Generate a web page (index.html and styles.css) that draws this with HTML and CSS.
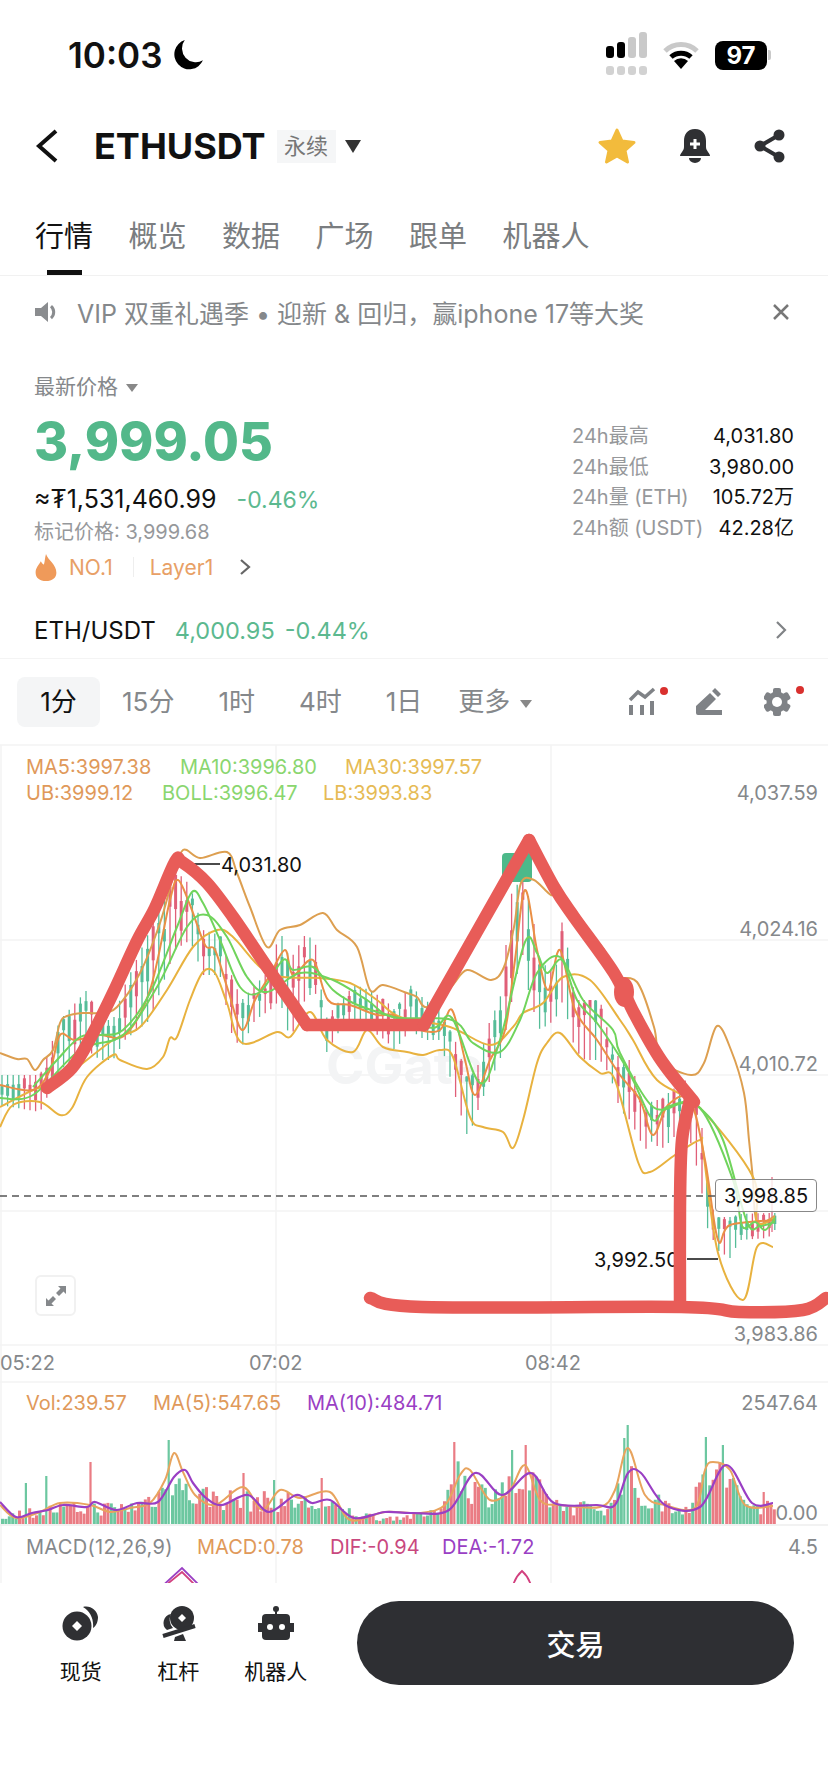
FILE: index.html
```html
<!DOCTYPE html>
<html lang="zh-CN">
<head>
    <meta charset="UTF-8">
    <meta name="viewport" content="width=device-width, initial-scale=1.0">
    <title>ETHUSDT 永续</title>
    <link rel="stylesheet" href="styles.css">
</head>
<body>
    <div class="status-bar">
        <div class="clock">
            <span>10:03</span>
            <svg width="32" height="32" viewBox="0 0 30 30"><path d="M12 1 A14 14 0 1 0 29 20 A13 13 0 0 1 12 1 Z" fill="#000"/></svg>
        </div>
        <div class="status-icons">
            <svg width="42" height="46" viewBox="0 0 42 46">
                <rect x="0" y="14" width="8" height="12" rx="3" fill="#000"/>
                <rect x="11" y="10" width="8" height="16" rx="3" fill="#000"/>
                <rect x="22" y="5" width="8" height="21" rx="3" fill="#c9c9c9"/>
                <rect x="33" y="0" width="8" height="26" rx="3" fill="#c9c9c9"/>
                <rect x="0" y="34" width="8" height="9" rx="3" fill="#d2d2d2"/>
                <rect x="11" y="34" width="8" height="9" rx="3" fill="#d2d2d2"/>
                <rect x="22" y="34" width="8" height="9" rx="3" fill="#d2d2d2"/>
                <rect x="33" y="34" width="8" height="9" rx="3" fill="#d2d2d2"/>
            </svg>
            <svg class="wifi" width="36" height="30" viewBox="0 0 36 30">
                <path d="M2 11 A23 23 0 0 1 34 11" fill="none" stroke="#c9c9c9" stroke-width="5"/>
                <path d="M8 17 A15 15 0 0 1 28 17" fill="none" stroke="#000" stroke-width="5"/>
                <path d="M11 21 L18 29 L25 21 A10 10 0 0 0 11 21 Z" fill="#000"/>
            </svg>
            <div class="battery">97</div>
            <div class="battery-tip"></div>
        </div>
    </div>

    <div class="nav">
        <svg class="back" width="24" height="34" viewBox="0 0 24 34"><path d="M22 2 L5 17 L22 32" fill="none" stroke="#111" stroke-width="4"/></svg>
        <span class="symbol">ETHUSDT</span>
        <span class="badge">永续</span>
        <span class="caret"></span>
        <div class="nav-icons">
            <svg width="40" height="38" viewBox="0 0 40 38"><path d="M20 3 L25 14 L37 15.500 L28 23.500 L30.500 35 L20 29 L9.500 35 L12 23.500 L3 15.500 L15 14 Z" fill="#f2bb3c" stroke="#f2bb3c" stroke-width="3" stroke-linejoin="round"/></svg>
            <svg width="32" height="34" viewBox="0 0 32 34">
                <path d="M16 0 C24 0 27 6 27 12 L27 18 C27 22 31 24 31 27 L1 27 C1 24 5 22 5 18 L5 12 C5 6 8 0 16 0 Z" fill="#2f3033"/>
                <path d="M10 29 L22 29 A6 5 0 0 1 10 29 Z" fill="#2f3033"/>
                <path d="M16 10 L16 20 M11 15 L21 15" stroke="#fff" stroke-width="3"/>
            </svg>
            <svg width="34" height="34" viewBox="0 0 34 34">
                <path d="M26 6 L7 17 L26 28" fill="none" stroke="#2f3033" stroke-width="4"/>
                <circle cx="26" cy="6" r="5.500" fill="#2f3033"/>
                <circle cx="7" cy="17" r="5.500" fill="#2f3033"/>
                <circle cx="26" cy="28" r="5.500" fill="#2f3033"/>
            </svg>
        </div>
    </div>

    <div class="tabs">
        <div class="tab active">行情</div>
        <div class="tab">概览</div>
        <div class="tab">数据</div>
        <div class="tab">广场</div>
        <div class="tab">跟单</div>
        <div class="tab">机器人</div>
    </div>

    <div class="notice">
        <svg width="24" height="22" viewBox="0 0 24 22">
            <path d="M0 7 L6 7 L13 1 L13 21 L6 15 L0 15 Z" fill="#8a8c8f"/>
            <path d="M16 5 A8 8 0 0 1 16 17" fill="none" stroke="#8a8c8f" stroke-width="3"/>
        </svg>
        <span class="notice-text">VIP 双重礼遇季 • 迎新 &amp; 回归，赢iphone 17等大奖</span>
        <svg class="notice-close" width="18" height="18" viewBox="0 0 18 18"><path d="M2 2 L16 16 M16 2 L2 16" stroke="#777" stroke-width="2.500"/></svg>
    </div>

    <div class="price-block">
        <div class="price-left">
            <div class="price-label">最新价格 <span class="caret small"></span></div>
            <div class="price-big">3,999.05</div>
            <div class="price-fiat">≈₮1,531,460.99<span class="up">-0.46%</span></div>
            <div class="price-mark">标记价格: 3,999.68</div>
            <div class="price-tags">
                <svg width="24" height="27" viewBox="0 0 22 26"><path d="M11 0 C13 6 21 10 21 18 C21 23 17 26 11 26 C5 26 1 23 1 18 C1 13 4 11 6 7 C7 9 8 10 9 10 C10 7 10 3 11 0 Z" fill="#ef9a5a"/></svg>
                <span class="tag-no">NO.1</span>
                <span class="tag-sep"></span>
                <span class="tag-name">Layer1</span>
                <svg width="12" height="18" viewBox="0 0 12 18"><path d="M2 2 L10 9 L2 16" fill="none" stroke="#666" stroke-width="2.200"/></svg>
            </div>
        </div>
        <div class="stats">
            <div class="stat"><span>24h最高</span><b>4,031.80</b></div>
            <div class="stat"><span>24h最低</span><b>3,980.00</b></div>
            <div class="stat"><span>24h量 (ETH)</span><b>105.72万</b></div>
            <div class="stat"><span>24h额 (USDT)</span><b>42.28亿</b></div>
        </div>
    </div>

    <div class="spot-row">
        <span class="spot-name">ETH/USDT</span>
        <span class="spot-price">4,000.95</span>
        <span class="spot-price">-0.44%</span>
        <svg class="spot-more" width="12" height="20" viewBox="0 0 12 20"><path d="M2 2 L10 10 L2 18" fill="none" stroke="#808386" stroke-width="2.200"/></svg>
    </div>

    <div class="timeframes">
        <div class="tf active">1分</div>
        <div class="tf">15分</div>
        <div class="tf">1时</div>
        <div class="tf">4时</div>
        <div class="tf">1日</div>
        <div class="tf more">更多 <span class="caret small"></span></div>
        <div class="tf-icons">
            <svg width="42" height="30" viewBox="0 0 42 30">
                <path d="M2 13 L10 5 L17 10 L26 2" fill="none" stroke="#7f8286" stroke-width="3.500"/>
                <path d="M3 18 L3 28 M14 18 L14 28 M24 14 L24 28" stroke="#7f8286" stroke-width="4"/>
                <circle cx="36" cy="4" r="4" fill="#d9302e"/>
            </svg>
            <svg width="28" height="30" viewBox="0 0 28 30">
                <path d="M1 19 L15 6 L21 12 L10 23 L27 23 L27 28 L3 28 Q1 28 1 26 Z M17 4 L20 1 L26 7 L23 10 Z" fill="#7f8286"/>
            </svg>
            <svg class="gear" width="44" height="32" viewBox="0 0 44 32">
                <g fill="#7f8286">
                    <circle cx="13" cy="16" r="10.500"/>
                    <rect x="9" y="2" width="8" height="28" rx="2"/>
                    <rect x="9" y="2" width="8" height="28" rx="2" transform="rotate(60 13 16)"/>
                    <rect x="9" y="2" width="8" height="28" rx="2" transform="rotate(120 13 16)"/>
                </g>
                <circle cx="13" cy="16" r="5" fill="#fff"/>
                <circle cx="36" cy="4" r="4" fill="#d9302e"/>
            </svg>
        </div>
    </div>

    <div class="chart">
        <svg class="chart-canvas" width="828" height="840" viewBox="0 743 828 840">
            <g class="grid">
                <path d="M0 745 L828 745 M0 940 L828 940 M0 1075 L828 1075 M0 1211 L828 1211 M0 1345 L828 1345 M0 1382 L828 1382"/>
                <path d="M1 745 L1 1583 M276 745 L276 1583 M551 745 L551 1583"/>
            </g>
            <text class="watermark" x="326" y="1084">CGate</text>
            <g id="candles"></g>
            <rect x="502" y="853" width="30" height="29" rx="4" fill="#4cb98a"/>
            <g id="curves"></g>
            <g id="volume"></g>
            <g id="macd"></g>

            <text class="legend" x="26" y="774" fill="#e0995a">MA5:3997.38</text>
            <text class="legend" x="180" y="774" fill="#8ad66f">MA10:3996.80</text>
            <text class="legend" x="345" y="774" fill="#e6bb55">MA30:3997.57</text>
            <text class="legend" x="26" y="800" fill="#e0995a">UB:3999.12</text>
            <text class="legend" x="162" y="800" fill="#8ad66f">BOLL:3996.47</text>
            <text class="legend" x="323" y="800" fill="#e6bb55">LB:3993.83</text>

            <text class="axis" x="818" y="800">4,037.59</text>
            <text class="axis" x="818" y="936">4,024.16</text>
            <text class="axis" x="818" y="1071">4,010.72</text>
            <text class="axis" x="818" y="1341">3,983.86</text>

            <path d="M193 864 L220 864 M687 1259 L718 1259" stroke="#111" stroke-width="1.500"/>
            <text class="mark" x="221" y="872">4,031.80</text>
            <text class="mark" x="594" y="1267">3,992.50</text>
            <path d="M0 1196 L715 1196" stroke="#555" stroke-width="1.500" stroke-dasharray="7 5"/>

            <text class="time" x="0" y="1370">05:22</text>
            <text class="time" x="249" y="1370">07:02</text>
            <text class="time" x="525" y="1370">08:42</text>

            <text class="legend" x="26" y="1410" fill="#e0995a">Vol:239.57</text>
            <text class="legend" x="153" y="1410" fill="#e0995a">MA(5):547.65</text>
            <text class="legend" x="307" y="1410" fill="#9a3fc4">MA(10):484.71</text>
            <text class="axis" x="818" y="1410">2547.64</text>
            <text class="axis" x="818" y="1520">0.00</text>

            <text class="legend wide" x="26" y="1554" fill="#85888b">MACD(12,26,9)</text>
            <text class="legend" x="197" y="1554" fill="#e0995a">MACD:0.78</text>
            <text class="legend" x="330" y="1554" fill="#c9487e">DIF:-0.94</text>
            <text class="legend" x="442" y="1554" fill="#9a3fc4">DEA:-1.72</text>
            <text class="axis" x="818" y="1554">4.5</text>

            <g id="ink"></g>
        </svg>
        <div class="last-price">3,998.85</div>
        <div class="expand">
            <svg width="22" height="22" viewBox="0 0 22 22">
                <path d="M13 1 L21 1 L21 9 L18.500 6.500 L14 11 L11 8 L15.500 3.500 Z M9 21 L1 21 L1 13 L3.500 15.500 L8 11 L11 14 L6.500 18.500 Z" fill="#85888b"/>
            </svg>
        </div>
    </div>

    <div class="bottom-bar">
        <div class="shortcut">
            <svg width="38" height="36" viewBox="0 0 38 36">
                <path d="M21 1 C28 -1 35 4 36 11 C36 16 34 20 31 22 C32 13 28 5 21 1 Z" fill="#2f3033"/>
                <circle cx="15" cy="20" r="14.500" fill="#2f3033"/>
                <path d="M15 15 L20 20 L15 25 L10 20 Z" fill="#fff"/>
            </svg>
            <span>现货</span>
        </div>
        <div class="shortcut">
            <svg width="38" height="36" viewBox="0 0 38 36">
                <circle cx="23" cy="12" r="12" fill="#2f3033"/>
                <path d="M23 8 L27 12 L23 16 L19 12 Z" fill="#fff"/>
                <path d="M12 8 A9 9 0 0 0 8 24 L14 22 A13 13 0 0 1 12 8 Z" fill="#2f3033"/>
                <path d="M4 30 L36 20" stroke="#2f3033" stroke-width="4"/>
                <path d="M16 31 L24 28 L27 35 L15 35 Z" fill="#2f3033"/>
            </svg>
            <span>杠杆</span>
        </div>
        <div class="shortcut">
            <svg width="38" height="36" viewBox="0 0 38 36">
                <circle cx="19" cy="3" r="3" fill="#2f3033"/>
                <path d="M18 4 L20 4 L20 10 L18 10 Z" fill="#2f3033"/>
                <rect x="5" y="8" width="28" height="26" rx="4" fill="#2f3033"/>
                <rect x="1" y="17" width="4" height="9" fill="#2f3033"/>
                <rect x="33" y="17" width="4" height="9" fill="#2f3033"/>
                <circle cx="13" cy="21" r="3" fill="#fff"/>
                <circle cx="25" cy="21" r="3" fill="#fff"/>
            </svg>
            <span>机器人</span>
        </div>
        <button class="trade">交易</button>
    </div>

    <script src="chart.js"></script>
</body>
</html>
```

FILE: styles.css
```css
* {
    box-sizing: border-box;
}

body {
    margin: 0;
    width: 828px;
    height: 1792px;
    overflow: hidden;
    background-color: #fff;
    color: #111;
    font-family: Inter, "Noto Sans CJK SC", sans-serif;
}

svg {
    display: block;
    flex: none;
}

.status-bar {
    display: flex;
    justify-content: space-between;
    align-items: center;
    height: 110px;
    padding: 0 57px 0 68px;
}

.clock {
    display: flex;
    align-items: center;
    gap: 10px;
    font-size: 35px;
    font-weight: 600;
}

.status-icons {
    display: flex;
    align-items: center;
}

.wifi {
    margin: 0 16px 0 15px;
}

.battery {
    width: 52px;
    height: 29px;
    border-radius: 8px;
    background-color: #000;
    color: #fff;
    font-size: 24px;
    font-weight: 700;
    line-height: 29px;
    text-align: center;
}

.battery-tip {
    width: 3px;
    height: 10px;
    margin-left: 1px;
    border-radius: 0 2px 2px 0;
    background-color: #c9c9c9;
}

.nav {
    display: flex;
    align-items: center;
    height: 72px;
    padding: 0 41px 0 34px;
}

.symbol {
    margin-left: 36px;
    font-size: 36px;
    font-weight: 700;
}

.badge {
    width: 59px;
    height: 33px;
    margin-left: 11px;
    background-color: #f5f6f7;
    color: #777;
    font-size: 22px;
    line-height: 33px;
    text-align: center;
}

.caret {
    width: 0;
    height: 0;
    margin-left: 9px;
    border-style: solid;
    border-width: 13px 8px 0;
    border-color: #333 transparent transparent;
}

.caret.small {
    display: inline-block;
    margin-left: 2px;
    border-width: 8px 6px 0;
    border-color: #888 transparent transparent;
    vertical-align: middle;
}

.nav-icons {
    display: flex;
    align-items: center;
    gap: 42px;
    margin-left: auto;
}

.tabs {
    display: flex;
    gap: 35.5px;
    height: 94px;
    padding: 39px 0 0 35px;
    border-bottom: 1px solid #f1f1f1;
}

.tab {
    color: #7a7d80;
    font-size: 29px;
    line-height: 32px;
}

.tab.active {
    color: #111;
}

.tab::after {
    content: "";
    display: block;
    width: 35px;
    height: 5px;
    margin: 17px auto 0;
}

.tab.active::after {
    background-color: #111;
}

.notice {
    display: flex;
    align-items: center;
    height: 72px;
    margin-bottom: 2px;
    padding: 0 38px 0 35px;
}

.notice-text {
    margin-left: 18px;
    color: #85888b;
    font-size: 25px;
}

.notice-close {
    margin-left: auto;
}

.price-block {
    display: flex;
    justify-content: space-between;
    height: 252px;
    padding: 25px 34px 0;
}

.price-label {
    color: #85888b;
    font-size: 21px;
    line-height: 24px;
}

.price-big {
    margin-top: 15px;
    color: #53b88a;
    font-size: 52px;
    font-weight: 800;
    line-height: 56px;
}

.price-fiat {
    margin-top: 14px;
    font-size: 25px;
    line-height: 30px;
}

.up {
    margin-left: 20px;
    color: #5cb98f;
    font-size: 23px;
}

.price-mark {
    margin-top: 4px;
    color: #96989b;
    font-size: 20px;
    line-height: 26px;
}

.price-tags {
    display: flex;
    align-items: center;
    height: 30px;
    margin-top: 7px;
    color: #e8a066;
    font-size: 21px;
}

.tag-no {
    margin-left: 11px;
}

.tag-sep {
    width: 1px;
    height: 20px;
    margin: 0 16px 0 20px;
    background-color: #eee;
}

.tag-name {
    margin-right: 26px;
}

.stats {
    width: 222px;
    padding-top: 46px;
    font-size: 20px;
}

.stat {
    display: flex;
    justify-content: space-between;
    height: 30.5px;
    line-height: 30.5px;
    color: #96989b;
    white-space: nowrap;
}

.stat b {
    color: #111;
    font-weight: 400;
}

.spot-row {
    display: flex;
    align-items: center;
    gap: 10px;
    height: 57px;
    padding: 0 41px 0 34px;
    border-bottom: 1px solid #f4f4f4;
    font-size: 24px;
}

.spot-name {
    margin-right: 9px;
}

.spot-price {
    color: #5cb98f;
    font-size: 23.500px;
}

.spot-more {
    margin-left: auto;
}

.timeframes {
    display: flex;
    align-items: flex-start;
    gap: 44px;
    height: 84px;
    padding: 18px 20px 0 17px;
    color: #85888b;
    font-size: 26px;
}

.tf {
    height: 50px;
    line-height: 50px;
    text-align: center;
}

.tf.active {
    width: 83px;
    margin-right: -22px;
    border-radius: 8px;
    background-color: #f4f5f6;
    color: #111;
}

.tf.more {
    margin-left: -8px;
    white-space: nowrap;
}

.tf-icons {
    display: flex;
    align-items: center;
    gap: 25px;
    height: 50px;
    margin-left: auto;
}

.gear {
    margin-left: 16px;
}

.chart {
    position: relative;
    height: 840px;
    overflow: hidden;
}

.chart-canvas {
    position: absolute;
    left: 0;
    top: 0;
}

.grid path {
    fill: none;
    stroke: #f4f4f4;
    stroke-width: 1.500;
}

.watermark {
    fill: #f3f4f5;
    font-size: 52px;
    font-weight: 700;
}

.legend,
.axis,
.time,
.mark {
    font-size: 20px;
}

.legend.wide {
    letter-spacing: 0.3px;
}

.axis {
    fill: #85888b;
    text-anchor: end;
}

.time {
    fill: #85888b;
}

.mark {
    fill: #111;
}

.last-price {
    position: absolute;
    left: 715px;
    top: 436px;
    width: 102px;
    height: 33px;
    border: 1px solid #888;
    border-radius: 4px;
    background-color: rgba(255, 255, 255, 0.82);
    font-size: 20px;
    line-height: 33px;
    text-align: center;
}

.expand {
    position: absolute;
    left: 35px;
    top: 532px;
    display: flex;
    justify-content: center;
    align-items: center;
    width: 41px;
    height: 41px;
    border: 2px solid #f1f1f1;
    border-radius: 6px;
    background-color: #fff;
}

.bottom-bar {
    display: flex;
    align-items: flex-start;
    padding: 18px 34px 0 32px;
}

.shortcut {
    display: flex;
    flex-direction: column;
    align-items: center;
    gap: 13px;
    width: 97.500px;
    padding-top: 5px;
    font-size: 21px;
}

.trade {
    width: 437px;
    height: 84px;
    margin-left: 32.500px;
    border: none;
    border-radius: 42px;
    background-color: #2e2f33;
    color: #fff;
    font-family: inherit;
    font-size: 29px;
    font-weight: 500;
}
```

FILE: chart.js
```js
// kline drawing, all points are in page pixels (viewBox starts at y=743)
const NS = 'http://www.w3.org/2000/svg';

let seed = 7;
function rnd() {
    seed = (seed * 16807) % 2147483647;
    return seed / 2147483647;
}

function add(group, tag, attrs) {
    const el = document.createElementNS(NS, tag);
    for (const key in attrs) el.setAttribute(key, attrs[key]);
    document.getElementById(group).appendChild(el);
}

// catmull-rom through the points
function smooth(p) {
    let d = `M${p[0][0]} ${p[0][1]}`;
    for (let i = 0; i < p.length - 1; i++) {
        const a = p[Math.max(i - 1, 0)], b = p[i], c = p[i + 1], e = p[Math.min(i + 2, p.length - 1)];
        const c1x = b[0] + (c[0] - a[0]) / 6, c1y = b[1] + (c[1] - a[1]) / 6;
        const c2x = c[0] - (e[0] - b[0]) / 6, c2y = c[1] - (e[1] - b[1]) / 6;
        d += ` C${c1x.toFixed(1)} ${c1y.toFixed(1)} ${c2x.toFixed(1)} ${c2y.toFixed(1)} ${c[0]} ${c[1]}`;
    }
    return d;
}

function lookup(table, x) {
    for (let i = 0; i < table.length - 1; i++) {
        if (x <= table[i + 1][0]) {
            const t = (x - table[i][0]) / (table[i + 1][0] - table[i][0]);
            return table[i].slice(1).map((v, k) => v + (table[i + 1][k + 1] - v) * t);
        }
    }
    return table[table.length - 1].slice(1);
}

// x, top, bottom of the candles around x
const range = [
    [0, 1075, 1105], [40, 1075, 1112], [60, 1020, 1070], [87, 990, 1050], [100, 1020, 1060], [113, 1020, 1060],
    [125, 985, 1040], [150, 930, 1020], [175, 870, 950], [190, 885, 940], [203, 930, 975], [220, 935, 975],
    [233, 980, 1040], [242, 1000, 1046], [255, 985, 1020], [270, 970, 1010], [280, 930, 1000], [290, 960, 1040],
    [305, 935, 1000], [315, 940, 990], [325, 1020, 1055], [340, 1000, 1030], [355, 985, 1025], [370, 990, 1030],
    [385, 1000, 1040], [395, 1010, 1050], [410, 985, 1030], [425, 1000, 1040], [440, 1010, 1040], [455, 1040, 1095],
    [468, 1080, 1138], [478, 1065, 1110], [490, 1020, 1080], [500, 1000, 1060], [512, 890, 1000], [522, 880, 950],
    [530, 900, 1000], [540, 960, 1030], [555, 975, 1020], [563, 915, 1000], [575, 1000, 1050], [585, 1000, 1060],
    [600, 1000, 1060], [610, 1040, 1075], [620, 1060, 1110], [630, 1060, 1120], [645, 1110, 1150], [653, 1100, 1140],
    [660, 1100, 1150], [672, 1090, 1140], [685, 1080, 1120], [700, 1110, 1180], [707, 1173, 1227], [712, 1207, 1237],
    [717, 1217, 1250], [730, 1217, 1258], [740, 1214, 1240], [768, 1213, 1238], [774, 1213, 1230]
];

for (let x = 2; x < 775; x += 5.6) {
    const [top, bottom] = lookup(range, x);
    const span = bottom - top;
    const green = rnd() < 0.55;
    const y = top + rnd() * span * 0.4;
    const h = 5 + rnd() * span * 0.4;
    const color = green ? '#55bd98' : '#e05f78';
    add('candles', 'line', { x1: x, x2: x, y1: top, y2: bottom, stroke: color, 'stroke-width': 1.3 });
    add('candles', 'rect', { x: x - 1.5, y: y, width: 3, height: h, fill: color });
}
add('candles', 'line', { x1: 772, x2: 772, y1: 1177, y2: 1232, stroke: '#e05f78', 'stroke-width': 1.2 });

const upper = [[0,1053],[17,1059],[27,1059],[35,1070],[43,1060],[53,1050],[60,1023],[67,1016],[83,1013],[100,1013],[117,1007],[140,973],[160,923],[173,877],[183,850],[200,858],[227,852],[237,873],[250,907],[267,947],[280,930],[300,925],[323,913],[337,930],[357,947],[370,990],[383,985],[407,993],[417,997],[427,1007],[451,987],[467,970],[491,980],[504,967],[514,927],[521,883],[534,880],[551,895],[561,893],[594,937],[606,953],[614,977],[637,982],[654,1027],[661,1060],[691,1075],[704,1063],[717,1026],[731,1050],[744,1093],[749,1140],[753,1180],[757,1222],[775,1216]];
const lower = [[0,1127],[13,1105],[40,1102],[60,1115],[72,1108],[87,1077],[113,1055],[120,1060],[147,1069],[163,1057],[170,1038],[177,1037],[190,1000],[203,972],[215,973],[227,1003],[242,1043],[277,1032],[290,1037],[310,1012],[327,1040],[353,1052],[367,1030],[383,1047],[407,1052],[423,1055],[440,1050],[453,1057],[470,1117],[483,1127],[503,1132],[513,1148],[523,1120],[537,1063],[547,1043],[560,1033],[580,1057],[600,1073],[615,1080],[638,1162],[650,1172],[675,1155],[700,1140],[703,1150],[718,1253],[743,1300],[757,1247],[773,1247]];
const mid = [[0,1107],[33,1090],[60,1080],[113,1040],[140,1027],[167,990],[193,947],[217,930],[233,937],[260,967],[283,977],[320,978],[350,983],[377,1000],[400,1017],[450,1027],[490,1045],[513,1027],[523,1013],[543,1003],[563,977],[590,980],[620,1020],[633,1040],[657,1080],[700,1108],[753,1177],[757,1222],[775,1218]];
const fast = [[33,1087],[57,1060],[80,1037],[100,1035],[123,1030],[150,993],[177,927],[192,892],[203,903],[220,940],[240,987],[260,992],[283,960],[293,970],[313,967],[333,990],[353,1003],[377,1012],[393,1017],[433,1028],[452,1018],[480,1083],[500,1040],[525,942],[537,953],[547,973],[562,960],[577,1000],[597,1023],[620,1057],[633,1080],[653,1120],[667,1107],[700,1108],[733,1180],[742,1226],[755,1222],[765,1230],[775,1218]];
const slow = [[0,1098],[33,1095],[80,1050],[123,1035],[157,987],[187,927],[207,915],[227,937],[247,977],[267,992],[300,973],[333,980],[367,1000],[393,1017],[452,1020],[473,1043],[500,1052],[520,1020],[537,973],[560,957],[583,1000],[613,1030],[620,1053],[653,1107],[683,1103],[700,1108],[723,1140],[747,1222],[760,1226],[775,1222]];
const ma5 = [[0,1085],[33,1090],[50,1070],[60,1035],[75,1040],[100,1035],[125,1035],[150,990],[170,900],[178,880],[190,905],[205,945],[215,950],[228,990],[242,1030],[255,1000],[270,975],[285,950],[293,975],[313,960],[328,1000],[350,1005],[377,1015],[393,1015],[420,1030],[440,1030],[452,1010],[465,1060],[475,1095],[490,1060],[505,1030],[515,960],[525,890],[537,950],[548,990],[560,950],[575,1010],[597,1040],[620,1075],[640,1100],[653,1135],[668,1105],[690,1100],[705,1160],[718,1240],[730,1225],[775,1220]];

[
    [upper, '#dd9f50'], [lower, '#e8b23f'], [mid, '#e8b23f'],
    [ma5, '#ea8f45'], [slow, '#70d45c'], [fast, '#70d45c']
].forEach(([pts, color]) => {
    add('curves', 'path', { d: smooth(pts), fill: 'none', stroke: color, 'stroke-width': 2 });
});

// volume bars, height envelope by x
const volTop = [[0,1512],[60,1502],[130,1500],[160,1480],[169,1445],[185,1480],[240,1490],[300,1492],[380,1516],[430,1510],[445,1480],[454,1450],[480,1480],[512,1465],[530,1470],[560,1500],[610,1500],[622,1445],[640,1490],[690,1500],[705,1450],[722,1455],[745,1495],[775,1500]];
const spikes = { 24: 1483, 45: 1476, 90: 1462, 169: 1440, 242: 1473, 272: 1480, 319: 1478, 454: 1442, 512: 1450, 525: 1445, 622: 1438, 626: 1425, 705: 1437, 722: 1445, 763: 1492 };

for (let x = 1; x < 776; x += 3.4) {
    const top = lookup(volTop, x)[0];
    let y = 1524 - (1524 - top) * (0.35 + rnd() * 0.65);
    let isSpike = false;
    for (const s in spikes) {
        if (Math.abs(s - x) < 1.7) { y = spikes[s]; isSpike = true; }
    }
    const color = rnd() < 0.5 ? '#6cc7a0' : '#ea7c84';
    add('volume', 'rect', { x: x, y: y, width: isSpike ? 2.2 : 3, height: 1524 - y, fill: color });
}

const volMa5 = [[0,1505],[16,1518],[40,1512],[60,1503],[90,1505],[110,1512],[130,1508],[150,1503],[165,1480],[174,1453],[183,1472],[195,1495],[215,1505],[243,1487],[262,1510],[280,1490],[300,1498],[330,1492],[350,1520],[385,1512],[420,1513],[445,1505],[460,1475],[470,1470],[490,1500],[510,1490],[525,1465],[540,1500],[560,1505],[600,1507],[615,1490],[628,1448],[645,1495],[665,1505],[695,1508],[705,1470],[713,1462],[730,1470],[745,1505],[773,1506]];
const volMa10 = [[0,1502],[16,1517],[32,1513],[48,1510],[63,1505],[87,1507],[95,1502],[116,1510],[137,1503],[158,1502],[174,1477],[185,1470],[193,1483],[206,1498],[222,1505],[248,1495],[269,1512],[296,1495],[312,1503],[330,1500],[354,1518],[385,1512],[412,1513],[449,1510],[475,1473],[502,1495],[531,1473],[554,1503],[597,1505],[615,1505],[628,1473],[641,1473],[665,1505],[700,1507],[726,1465],[752,1503],[773,1503]];
add('volume', 'path', { d: smooth(volMa5), fill: 'none', stroke: '#e8a45e', 'stroke-width': 2 });
add('volume', 'path', { d: smooth(volMa10), fill: 'none', stroke: '#9a3fc4', 'stroke-width': 2.2 });
add('volume', 'line', { x1: 0, x2: 828, y1: 1525, y2: 1525, stroke: '#eeeeee', 'stroke-width': 1.5 });

add('macd', 'path', { d: 'M158 1590 L182 1568 L204 1590', fill: 'none', stroke: '#9a3fc4', 'stroke-width': 1.8 });
add('macd', 'path', { d: 'M160 1590 L182 1572 L200 1590', fill: 'none', stroke: '#d2407f', 'stroke-width': 1.8 });
add('macd', 'path', { d: 'M512 1590 Q514 1578 522 1571 Q530 1578 532 1590', fill: 'none', stroke: '#d2407f', 'stroke-width': 1.8 });

// hand drawn marks on top of the chart
const ink = [
    [[47,1088],[72,1068],[92,1035],[113,993],[137,941],[155,908],[175,862],[182,862],[207,883],[233,917],[267,967],[307,1025]],
    [[307,1025],[424,1025]],
    [[424,1025],[529,840]],
    [[529,840],[554,887],[574,917],[614,973],[634,1013],[661,1060],[694,1102]],
    [[690,1100],[682,1140],[680,1207],[680,1303]],
    [[370,1298],[422,1307],[681,1307],[739,1312],[803,1310],[826,1298]]
];
ink.forEach(pts => {
    add('ink', 'path', { d: smooth(pts), fill: 'none', stroke: '#e85c58', 'stroke-width': 12.5, 'stroke-linecap': 'round', 'stroke-linejoin': 'round' });
});
add('ink', 'ellipse', { cx: 624, cy: 992, rx: 10, ry: 15, fill: '#e85c58' });
```
